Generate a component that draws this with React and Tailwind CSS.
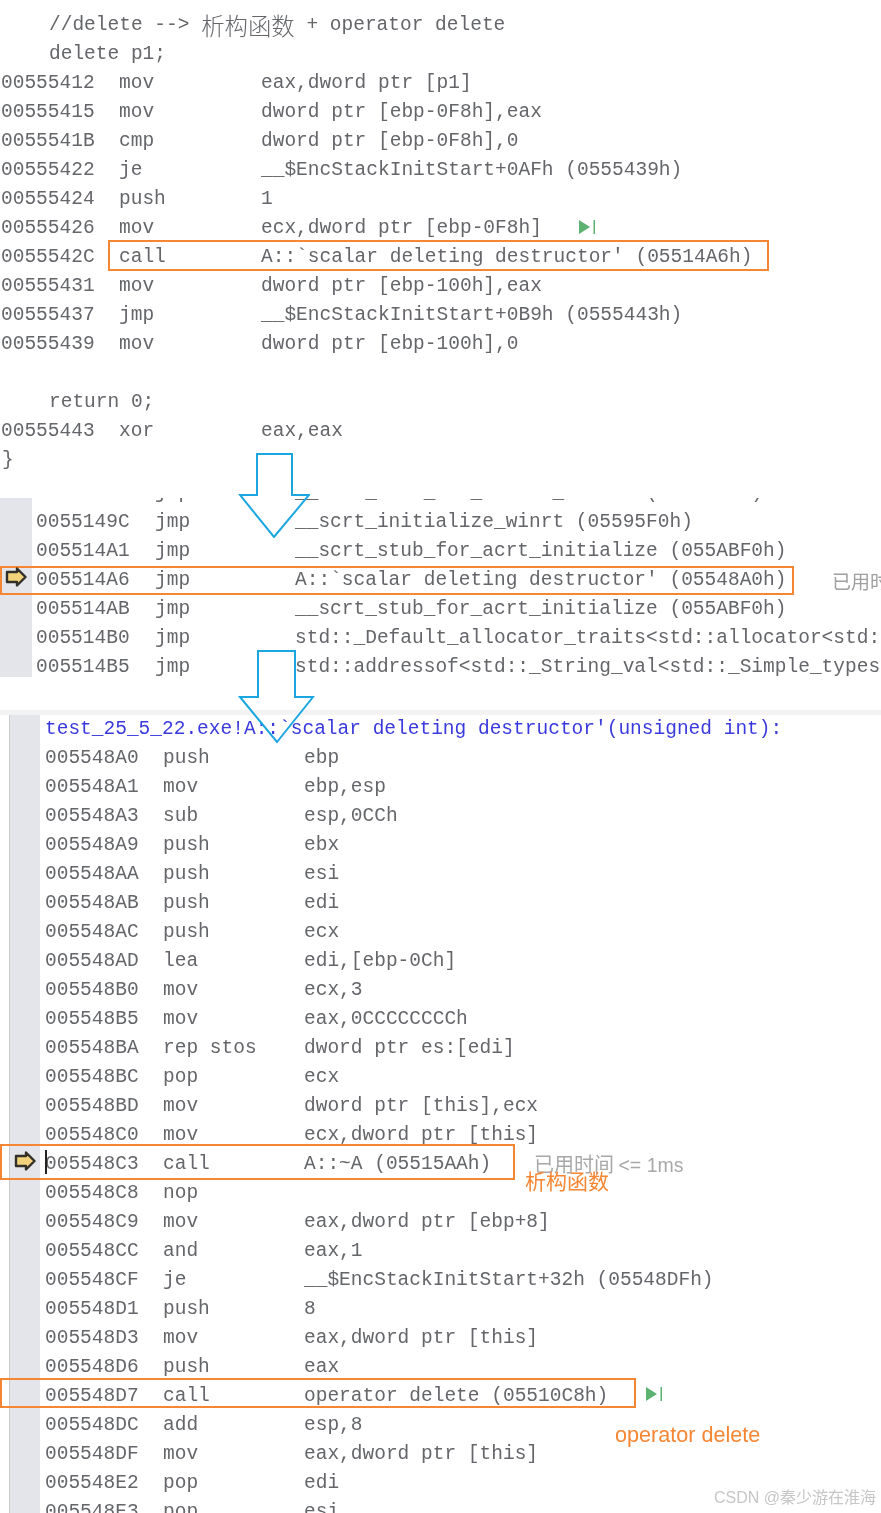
import React from 'react';

const topRows = [
  ['00555412', 'mov', 'eax,dword ptr [p1]'],
  ['00555415', 'mov', 'dword ptr [ebp-0F8h],eax'],
  ['0055541B', 'cmp', 'dword ptr [ebp-0F8h],0'],
  ['00555422', 'je', '__$EncStackInitStart+0AFh (0555439h)'],
  ['00555424', 'push', '1'],
  ['00555426', 'mov', 'ecx,dword ptr [ebp-0F8h]'],
  ['0055542C', 'call', "A::`scalar deleting destructor' (05514A6h)"],
  ['00555431', 'mov', 'dword ptr [ebp-100h],eax'],
  ['00555437', 'jmp', '__$EncStackInitStart+0B9h (0555443h)'],
  ['00555439', 'mov', 'dword ptr [ebp-100h],0'],
];

const jumpRows = [
  ['0055149C', 'jmp', '__scrt_initialize_winrt (05595F0h)'],
  ['005514A1', 'jmp', '__scrt_stub_for_acrt_initialize (055ABF0h)'],
  ['005514A6', 'jmp', "A::`scalar deleting destructor' (05548A0h)"],
  ['005514AB', 'jmp', '__scrt_stub_for_acrt_initialize (055ABF0h)'],
  ['005514B0', 'jmp', 'std::_Default_allocator_traits<std::allocator<std::_String_val<std::_Simple_types'],
  ['005514B5', 'jmp', 'std::addressof<std::_String_val<std::_Simple_types<char> > >'],
];

const funcRows = [
  ['005548A0', 'push', 'ebp'],
  ['005548A1', 'mov', 'ebp,esp'],
  ['005548A3', 'sub', 'esp,0CCh'],
  ['005548A9', 'push', 'ebx'],
  ['005548AA', 'push', 'esi'],
  ['005548AB', 'push', 'edi'],
  ['005548AC', 'push', 'ecx'],
  ['005548AD', 'lea', 'edi,[ebp-0Ch]'],
  ['005548B0', 'mov', 'ecx,3'],
  ['005548B5', 'mov', 'eax,0CCCCCCCCh'],
  ['005548BA', 'rep stos', 'dword ptr es:[edi]'],
  ['005548BC', 'pop', 'ecx'],
  ['005548BD', 'mov', 'dword ptr [this],ecx'],
  ['005548C0', 'mov', 'ecx,dword ptr [this]'],
  ['005548C3', 'call', 'A::~A (05515AAh)'],
  ['005548C8', 'nop', ''],
  ['005548C9', 'mov', 'eax,dword ptr [ebp+8]'],
  ['005548CC', 'and', 'eax,1'],
  ['005548CF', 'je', '__$EncStackInitStart+32h (05548DFh)'],
  ['005548D1', 'push', '8'],
  ['005548D3', 'mov', 'eax,dword ptr [this]'],
  ['005548D6', 'push', 'eax'],
  ['005548D7', 'call', 'operator delete (05510C8h)'],
  ['005548DC', 'add', 'esp,8'],
  ['005548DF', 'mov', 'eax,dword ptr [this]'],
  ['005548E2', 'pop', 'edi'],
  ['005548E3', 'pop', 'esi'],
];

const Row = ({ row, addr, op }) => (
  <div className="flex h-[29px] items-center whitespace-pre">
    <span className={addr}>{row[0]}</span>
    <span className={op}>{row[1]}</span>
    <span>{row[2]}</span>
  </div>
);

const Pointer = ({ className }) => (
  <svg className={className} width="22" height="20" viewBox="0 0 22 20">
    <path d="M2 5H12V1.5L20.5 10L12 18.5V15H2Z" fill="#f3d27c" stroke="#33302a" strokeWidth="2.4" strokeLinejoin="round" />
  </svg>
);

const StepIcon = ({ className }) => (
  <svg className={className} width="18" height="16" viewBox="0 0 18 16">
    <path d="M1 1L12 8L1 15Z" fill="#5cb270" />
    <rect x="15.5" y="1" width="1.5" height="14" fill="#5cb270" />
  </svg>
);

const Arrow = ({ className, w, h, d }) => (
  <svg className={className} width={w} height={h} viewBox={`0 0 ${w} ${h}`}>
    <path d={d} fill="none" stroke="#1aa7e0" strokeWidth="2" />
  </svg>
);

export default function App() {
  return (
    <div className="relative h-[1513px] w-[881px] overflow-hidden bg-white font-['Liberation_Mono','Noto_Sans_CJK_SC',monospace] text-[19.5px] text-[#64666a] blur-[0.4px]">
      <section className="pt-[11px]">
        <div className="flex h-[29px] items-center whitespace-pre pl-[49px]">
          //delete --&gt; <span className="font-['Noto_Sans_CJK_SC',sans-serif] text-[23.4px] font-light">析构函数</span> + operator delete
        </div>
        <div className="flex h-[29px] items-center whitespace-pre pl-[49px]">delete p1;</div>
        <div className="pl-px">
          {topRows.map((r) => (
            <Row key={r[0]} row={r} addr="w-[118px]" op="w-[142px]" />
          ))}
        </div>
        <div className="h-[29px]" />
        <div className="flex h-[29px] items-center whitespace-pre pl-[49px]">return 0;</div>
        <div className="pl-px">
          <Row row={['00555443', 'xor', 'eax,eax']} addr="w-[118px]" op="w-[142px]" />
        </div>
        <div className="flex h-[29px] items-center pl-[2px]">{'}'}</div>
      </section>

      <section className="mt-[23px] flex h-[179px] overflow-hidden">
        <div className="w-[32px] shrink-0 bg-[#e4e5ea]" />
        <div className="pl-[4px]">
          <div className="flex h-[10px] items-end overflow-hidden">
            <div className="shrink-0">
              <Row row={['00551497', 'jmp', '__scrt_stub_for_thread_module (0555AB0h)']} addr="w-[119px]" op="w-[140px]" />
            </div>
          </div>
          {jumpRows.map((r) => (
            <Row key={r[0]} row={r} addr="w-[119px]" op="w-[140px]" />
          ))}
        </div>
      </section>

      <section className="mt-[33px]">
        <div className="h-[5px] bg-[#f3f3f3]" />
        <div className="flex">
          <div className="ml-[9px] w-[31px] shrink-0 border-l border-[#c9cad0] bg-[#e4e5ea]" />
          <div className="pl-[5px]">
            <div className="flex h-[29px] items-center whitespace-pre text-[#3a3ade]">
              test_25_5_22.exe!A::`scalar deleting destructor'(unsigned int):
            </div>
            {funcRows.map((r) => (
              <Row key={r[0]} row={r} addr="w-[118px]" op="w-[141px]" />
            ))}
          </div>
        </div>
      </section>

      {/* annotations drawn on top of the listings */}
      <Arrow className="absolute left-[238px] top-[452px]" w={72} h={86} d="M19 2H54V43H71L36 85L2 43H19Z" />
      <Arrow className="absolute left-[238px] top-[649px]" w={77} h={95} d="M20 2H57V48H75L39 93L2 48H20Z" />

      <div className="absolute left-[108px] top-[240px] h-[31px] w-[661px] border-2 border-[#f58634]" />
      <div className="absolute left-0 top-[566px] h-[29px] w-[794px] border-2 border-[#f58634]" />
      <div className="absolute left-0 top-[1144px] h-[36px] w-[515px] border-2 border-[#f58634]" />
      <div className="absolute left-0 top-[1378px] h-[30px] w-[636px] border-2 border-[#f58634]" />

      <StepIcon className="absolute left-[578px] top-[219px]" />
      <StepIcon className="absolute left-[645px] top-[1386px]" />
      <Pointer className="absolute left-[5px] top-[567px]" />
      <Pointer className="absolute left-[14px] top-[1151px]" />
      <div className="absolute left-[45px] top-[1150px] h-[24px] w-[2px] bg-[#222]" />

      <div className="absolute left-[832px] top-[567px] whitespace-pre font-['Noto_Sans_CJK_SC',sans-serif] text-[19px] leading-[28px] text-[#a0a0a0]">已用时间</div>
      <div className="absolute left-[534px] top-[1150px] whitespace-pre font-['Noto_Sans_CJK_SC',sans-serif] text-[20px] leading-[28px] text-[#a8a8a8]">
        已用时间 <span className="font-['Liberation_Sans',sans-serif] text-[19.5px]">&lt;= 1ms</span>
      </div>
      <div className="absolute left-[525px] top-[1165px] font-['Noto_Sans_CJK_SC',sans-serif] text-[21px] leading-[30px] text-[#f58634]">析构函数</div>
      <div className="absolute left-[615px] top-[1420px] font-['Liberation_Sans',sans-serif] text-[21.6px] leading-[30px] text-[#f58634]">operator delete</div>
      <div className="absolute left-[714px] top-[1487px] font-['Liberation_Sans','Noto_Sans_CJK_SC',sans-serif] text-[16px] leading-[22px] text-[#c6c6c6]">CSDN @秦少游在淮海</div>
    </div>
  );
}
